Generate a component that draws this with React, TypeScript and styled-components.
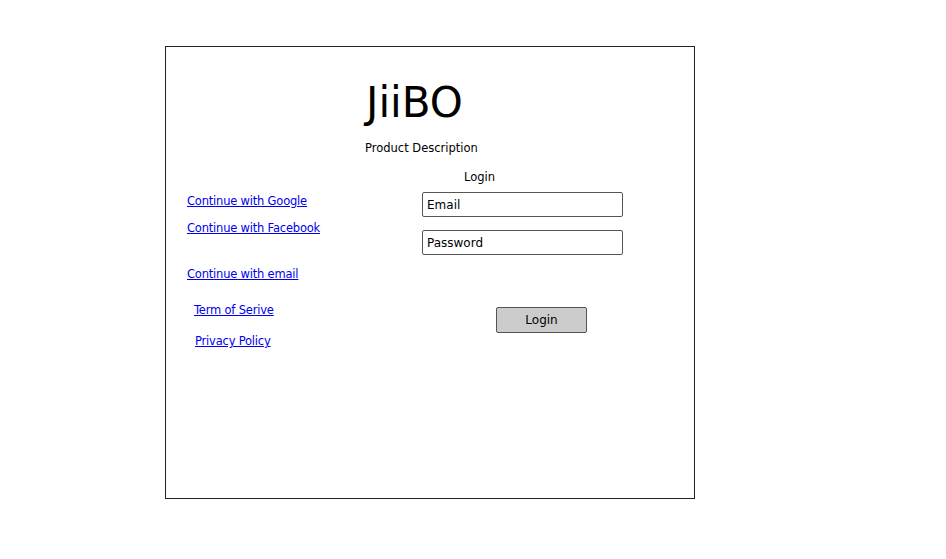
import React from "react";
import styled, { createGlobalStyle } from "styled-components";

const GlobalStyle = createGlobalStyle`
  body {
    margin: 0;
    background: #fff;
    font-family: "Comic Sans MS", "DejaVu Sans", sans-serif;
    color: #000;
  }
`;

const Page = styled.div`
  padding: 46px 0 0 165px;
`;

const Frame = styled.div`
  box-sizing: border-box;
  width: 530px;
  height: 453px;
  border: 1px solid #222;
  display: flex;
  flex-direction: column;
`;

const Title = styled.h1`
  margin: 33px 0 0 200px;
  font-size: 42px;
  line-height: 46px;
  font-weight: normal;
`;

const Description = styled.div`
  margin: 14px 0 0 199px;
  font-size: 11.5px;
  line-height: 16px;
`;

const Body = styled.div`
  display: flex;
  margin-top: 13px;
  padding-left: 21px;
`;

const LeftCol = styled.div`
  width: 235px;
  display: flex;
  flex-direction: column;
  align-items: flex-start;
  padding-top: 24px;
`;

const Link = styled.a<{ $gap?: number; $indent?: number }>`
  margin-top: ${(p) => p.$gap || 0}px;
  margin-left: ${(p) => p.$indent || 0}px;
  font-size: 11.5px;
  letter-spacing: -0.2px;
  line-height: 16px;
  color: #0000ee;
  text-decoration: underline;
  cursor: pointer;
`;

const RightCol = styled.div`
  display: flex;
  flex-direction: column;
  align-items: flex-start;
`;

const FormLabel = styled.div`
  margin-left: 42px;
  font-size: 11.5px;
  line-height: 16px;
`;

const Field = styled.div<{ $gap: number }>`
  box-sizing: border-box;
  margin-top: ${(p) => p.$gap}px;
  width: 201px;
  height: 25px;
  border: 1.5px solid #555;
  border-radius: 2px;
  padding: 0 4px;
  display: flex;
  align-items: center;
  font-size: 12px;
`;

const Button = styled.button`
  box-sizing: border-box;
  margin: 52px 0 0 74px;
  width: 91px;
  height: 26px;
  background: #cccccc;
  border: 1.5px solid #555;
  border-radius: 2px;
  font-family: inherit;
  font-size: 12px;
  color: #000;
  padding: 0;
`;

export default function App() {
  return (
    <Page>
      <GlobalStyle />
      <Frame>
        <Title>JiiBO</Title>
        <Description>Product Description</Description>
        <Body>
          <LeftCol>
            <Link>Continue with Google</Link>
            <Link $gap={11}>Continue with Facebook</Link>
            <Link $gap={30}>Continue with email</Link>
            <Link $gap={20} $indent={7}>
              Term of Serive
            </Link>
            <Link $gap={15} $indent={8}>
              Privacy Policy
            </Link>
          </LeftCol>
          <RightCol>
            <FormLabel>Login</FormLabel>
            <Field $gap={7}>Email</Field>
            <Field $gap={13}>Password</Field>
            <Button>Login</Button>
          </RightCol>
        </Body>
      </Frame>
    </Page>
  );
}
